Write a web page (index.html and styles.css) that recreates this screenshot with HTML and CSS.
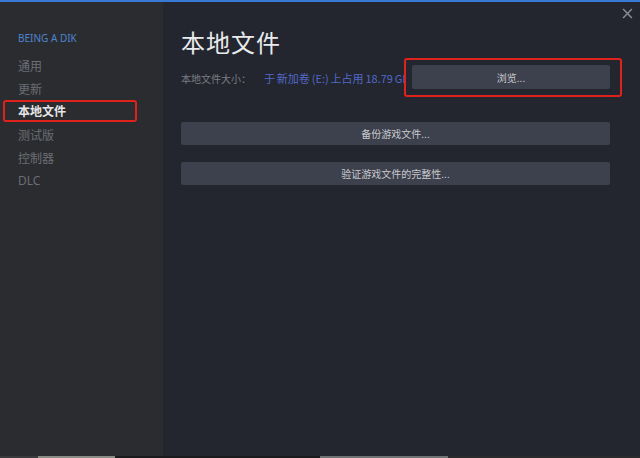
FILE: index.html
```html
<!DOCTYPE html>
<html lang="zh-CN">
<head>
<meta charset="utf-8">
<title>本地文件</title>
<link rel="stylesheet" href="styles.css">
</head>
<body>
<div class="window">
  <div class="topline"></div>
  <div class="body">
    <nav class="sidebar">
      <div class="game">BEING A DIK</div>
      <ul class="menu">
        <li>通用</li>
        <li>更新</li>
        <li class="active"><span class="hl">本地文件</span></li>
        <li>测试版</li>
        <li>控制器</li>
        <li class="latin">DLC</li>
      </ul>
    </nav>
    <main class="main">
      <button class="close" aria-label="关闭">
        <svg width="11" height="11" viewBox="0 0 10 10"><path d="M1 1L9 9M9 1L1 9" stroke="#8b8e95" stroke-width="1.3" fill="none"/></svg>
      </button>
      <h1 class="title">本地文件</h1>
      <div class="sizerow">
        <div class="sizeinfo">本地文件大小：<span class="loc">于 新加卷 (E:) 上占用 18.79 GB</span></div>
        <div class="hlbox"><button class="btn">浏览...</button></div>
      </div>
      <button class="btn wide first">备份游戏文件...</button>
      <button class="btn wide">验证游戏文件的完整性...</button>
    </main>
  </div>
  <div class="taskbar"></div>
</div>
</body>
</html>
```
FILE: styles.css
```css
* { box-sizing: border-box; }
html, body { margin: 0; padding: 0; background: #23262e; }
body {
  width: 640px;
  height: 458px;
  overflow: hidden;
  font-family: "Noto Sans CJK SC", "Noto Sans", sans-serif;
}
.window {
  display: flex;
  flex-direction: column;
  height: 458px;
}
.topline { height: 2px; background: #3b79d6; flex: none; }
.body {
  flex: 1;
  display: grid;
  grid-template-columns: 163px 1fr;
  min-height: 0;
}
.sidebar {
  background: #2b2c30;
  padding: 29px 0 0 0;
}
.game {
  color: #4f84d0;
  font-size: 10px;
  font-family: "Noto Sans", "Noto Sans CJK SC", sans-serif;
  padding-left: 18px;
  height: 14px;
  line-height: 14px;
}
.menu {
  list-style: none;
  margin: 9px 0 0 0;
  padding: 0;
}
.menu li {
  height: 23px;
  line-height: 23px;
  font-size: 12px;
  color: #6c6e74;
  padding-left: 18px;
}
.menu li.latin { font-family: "Noto Sans", sans-serif; }
.menu li.active {
  padding-left: 3px;
  color: #e6e6e6;
  font-weight: bold;
}
.hl {
  display: block;
  width: 134px;
  height: 22px;
  line-height: 18px;
  border: 2px solid #e0221c;
  border-radius: 3px;
  padding-left: 13px;
}
.main {
  position: relative;
  padding: 24px 18px 0 18px;
  background: #23262e;
}
.close {
  position: absolute;
  top: 4px;
  right: 5px;
  width: 15px;
  height: 15px;
  padding: 2px;
  border: 0;
  background: transparent;
  display: flex;
}
.title {
  margin: 0;
  font-size: 24px;
  font-weight: 400;
  color: #e9eaec;
  height: 32px;
  line-height: 32px;
  letter-spacing: 1px;
}
.sizerow {
  display: flex;
  align-items: center;
  justify-content: space-between;
  width: 441px;
}
.sizeinfo {
  flex: 0 1 auto;
  min-width: 0;
  font-size: 10px;
  color: #7b7e85;
  white-space: nowrap;
  overflow: visible;
}
.loc { color: #5269c9; margin-left: 13px; font-size: 11px; word-spacing: -0.6px; }
.hlbox {
  flex: none;
  position: relative;
  border: 2px solid #e0221c;
  border-radius: 3px;
  padding: 5px 9px 6px 6px;
  width: 218px;
  height: 39px;
  background: #23262e;
}
.btn {
  display: block;
  width: 198px;
  height: 24px;
  border: 0;
  border-radius: 2px;
  background: #3d404d;
  color: #c9cacd;
  font-family: "Noto Sans CJK SC", sans-serif;
  font-size: 10px;
  padding: 0;
}
.btn.wide {
  width: 429px;
  height: 23px;
}
.btn.first { margin-top: 25px; }
.btn.wide + .btn.wide { margin-top: 17px; }
.taskbar {
  height: 2px;
  flex: none;
  background: linear-gradient(90deg, #3a3b3d 0 6%, #8a8c86 6% 18%, #1a1b1d 18% 50%, #6f7374 50% 70%, #2a2b2c 70% 100%);
}
```
